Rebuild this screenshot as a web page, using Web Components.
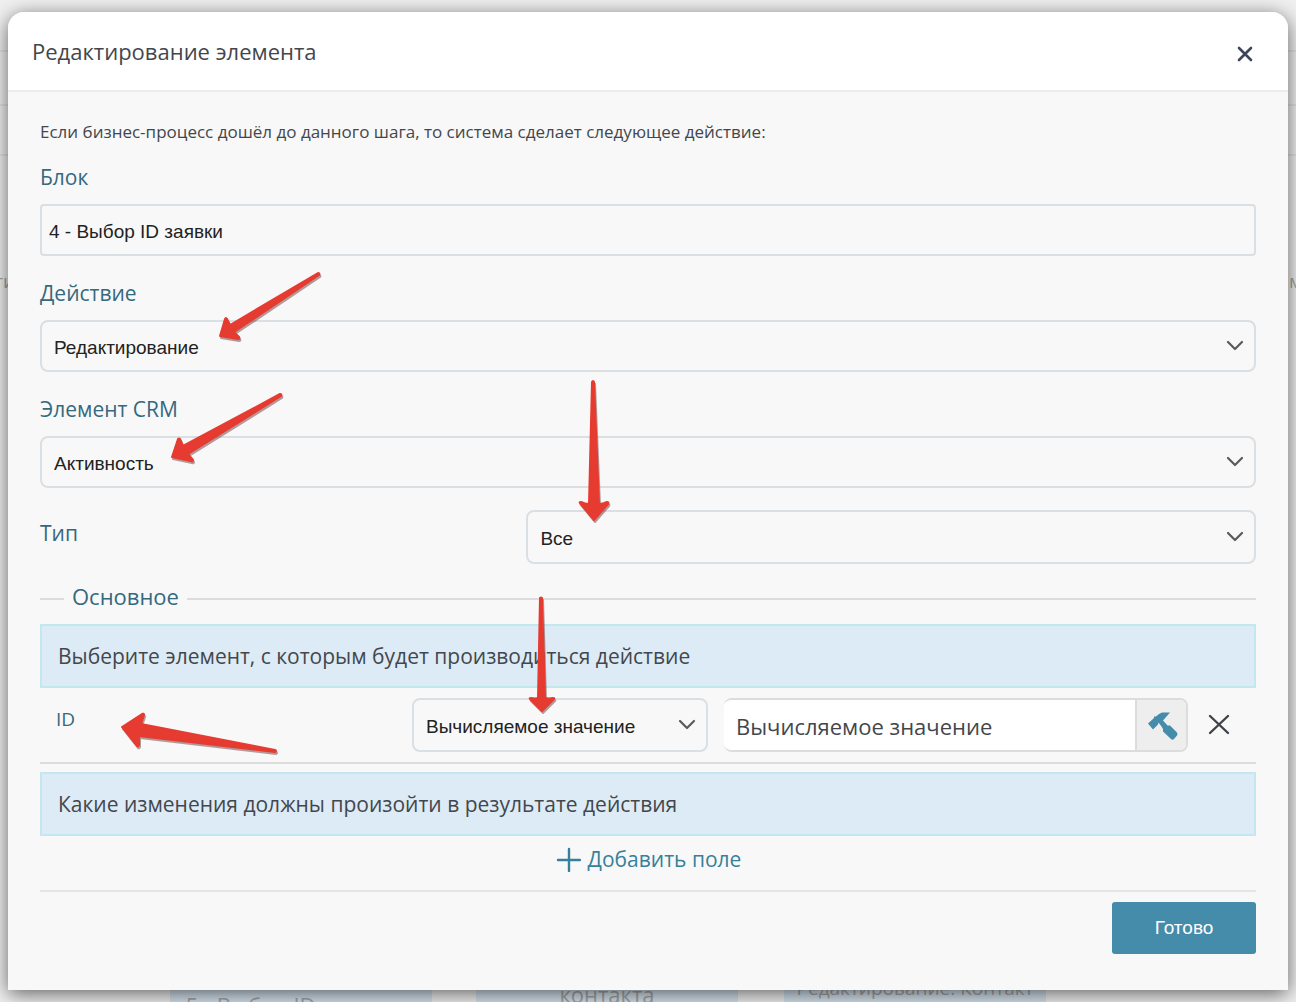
<!DOCTYPE html>
<html lang="ru">
<head>
<meta charset="utf-8">
<title>Редактирование элемента</title>
<style>
  html, body { margin: 0; min-height: 100%; }
  body { background: #ededed; font-family: "Open Sans", "Noto Sans", sans-serif; color: #43474c; overflow: hidden; }
</style>
</head>
<body>
<process-page>
  <process-canvas slot="canvas"></process-canvas>
  <modal-dialog heading="Редактирование элемента">
    <intro-text>Если бизнес-процесс дошёл до данного шага, то система сделает следующее действие:</intro-text>
    <text-field label="Блок" value="4 - Выбор ID заявки"></text-field>
    <select-field label="Действие" value="Редактирование"></select-field>
    <select-field label="Элемент CRM" value="Активность"></select-field>
    <select-field label="Тип" value="Все" inline></select-field>
    <field-group legend="Основное">
      <info-banner>Выберите элемент, с которым будет производиться действие</info-banner>
      <condition-row label="ID" mode="Вычисляемое значение" value="Вычисляемое значение"></condition-row>
      <info-banner>Какие изменения должны произойти в результате действия</info-banner>
      <add-link>Добавить поле</add-link>
    </field-group>
    <action-button slot="footer">Готово</action-button>
  </modal-dialog>
  <pointer-arrows slot="notes"></pointer-arrows>
</process-page>
<script>
const define = (name, html, setup) => customElements.define(name, class extends HTMLElement {
  constructor() {
    super();
    const t = document.createElement('template');
    t.innerHTML = '<style>*{box-sizing:border-box}</style>' + html;
    this.attachShadow({ mode: 'open' }).append(t.content.cloneNode(true));
  }
  connectedCallback() { if (setup) setup(this, this.shadowRoot); }
});

const selectCss = `
  .select { display: grid; align-items: center; }
  .select > * { grid-area: 1 / 1; }
  select { appearance: none; width: 100%; height: 52px; padding: 2px 40px 0 12px; border: 2px solid #d9dfe3; border-radius: 8px;
    background: #f8f8f8; color: #222; font: 19px "Liberation Sans", Arial, sans-serif; }
  .select svg { justify-self: end; margin-right: 12px; pointer-events: none; }`;
const chevron = `<svg width="18" height="12" viewBox="0 0 18 12" fill="none" stroke="#5a5a5a" stroke-width="2.2" stroke-linecap="round" stroke-linejoin="round"><path d="M2 2l7 7 7-7"/></svg>`;

define('process-page', `
<style>
  :host { display: grid; position: relative; min-height: 100vh; overflow: hidden; }
  ::slotted(*) { grid-area: 1 / 1; min-width: 0; }
</style>
<slot name="canvas"></slot><slot></slot><slot name="notes"></slot>`);

define('process-canvas', `
<style>
  :host { display: block; position: absolute; inset: 0; overflow: hidden; color: #a6a6a6; font-size: 19px; line-height: 28px; background: #f0f0f0; }
  .bar { border-bottom: 2px solid #e2e2e2; }
  .bar.tabs { height: 52px; }
  .bar.tools { height: 54px; }
  .bar.path { height: 50px; }
  .edge { position: absolute; top: 267px; }
  .left { left: -6px; }
  .right { right: -7px; }
  .node { position: absolute; top: 940px; height: 80px; background: #d5e3ee; text-align: center; padding-top: 40px; width: 262px; white-space: nowrap; }
  .a { left: 170px; padding-top: 51px; font-size: 22px; }
  .b { left: 476px; font-size: 22px; }
  .c { left: 784px; padding-top: 34px; }
</style>
<div class="bar tabs"></div><div class="bar tools"></div><div class="bar path"></div>
<span class="edge left">ти</span><span class="edge right">м</span>
<div class="node a">5 - Выбор ID контакта</div>
<div class="node b">контакта</div>
<div class="node c">Редактирование: Контакт</div>`);

define('modal-dialog', `
<style>
  :host { display: block; position: relative; align-self: start; margin: 12px 8px; background: #f8f8f8; border-radius: 16px 16px 0 0;
    box-shadow: 0 4px 20px rgba(0,0,0,.6); }
  header { display: flex; align-items: center; justify-content: space-between; height: 80px; padding: 0 31px 0 24px; background: #fff;
    border-bottom: 2px solid #ebedee; border-radius: 16px 16px 0 0; }
  h2 { margin: 0; font-size: 22px; line-height: 30px; font-weight: 500; }
  .close { display: grid; place-items: center; width: 24px; height: 24px; margin-top: 6px; padding: 0; border: 0; background: none; }
  main { display: block; padding: 24px 32px 0; }
  footer { display: flex; justify-content: flex-end; margin: 0 32px; padding: 10px 0 36px; border-top: 2px solid #e5e5e5; }
</style>
<header><h2></h2>
<button class="close" aria-label="Закрыть"><svg width="16" height="16" viewBox="0 0 16 16" fill="none" stroke="#3d465b" stroke-width="2.6" stroke-linecap="round"><path d="M2 2l12 12M14 2L2 14"/></svg></button></header>
<main><slot></slot></main>
<footer><slot name="footer"></slot></footer>`,
(el, r) => { r.querySelector('h2').textContent = el.getAttribute('heading'); });

define('intro-text', `<style>:host { display: block; font-size: 17px; line-height: 32px; }</style><slot></slot>`);

define('text-field', `
<style>
  :host { display: block; padding-top: 12px; }
  label { display: block; color: #34697f; font-size: 21px; line-height: 34px; margin-bottom: 10px; }
  input { display: block; width: 100%; height: 52px; padding: 3px 7px 0; border: 2px solid #d9dfe3; border-radius: 4px; background: #f8f8f8; color: #222;
    font: 19px "Liberation Sans", Arial, sans-serif; }
</style>
<label for="f"></label><input id="f" type="text">`,
(el, r) => { r.querySelector('label').textContent = el.getAttribute('label'); r.querySelector('input').value = el.getAttribute('value'); });

define('select-field', `
<style>${selectCss}
  :host { display: block; padding-top: 20px; }
  label { display: block; color: #34697f; font-size: 21px; line-height: 34px; margin-bottom: 10px; }
  :host([inline]) { display: grid; grid-template-columns: 2fr 3fr; padding-top: 22px; }
  :host([inline]) label { padding-top: 6px; margin: 0; }
  :host([inline]) select { height: 54px; padding-top: 3px; }
</style>
<label for="f"></label><div class="select"><select id="f"><option></option></select>${chevron}</div>`,
(el, r) => { r.querySelector('label').textContent = el.getAttribute('label'); r.querySelector('option').textContent = el.getAttribute('value'); });

define('field-group', `
<style>
  :host { display: block; padding-top: 16px; }
  fieldset { margin: 0; padding: 6px 0 0; border: 0; border-top: 2px solid #dcdcdc; min-width: 0; }
  legend { margin-left: 24px; padding: 0 8px 6px; color: #34697f; font-size: 22px; line-height: 32px; }
</style>
<fieldset><legend></legend><slot></slot></fieldset>`,
(el, r) => { r.querySelector('legend').textContent = el.getAttribute('legend'); });

define('info-banner', `
<style>:host { display: block; padding: 14px 16px; border: 2px solid #c2e7ef; background: #ddebf6; font-size: 21px; line-height: 32px; }</style><slot></slot>`);

define('condition-row', `
<style>${selectCss}
  :host { display: grid; grid-template-columns: 356px 296px minmax(0, 1fr) 30px; padding: 10px 22px 10px 16px; margin-bottom: 8px; border-bottom: 2px solid #dcdcdc; }
  label { color: #34697f; font-size: 19px; line-height: 24px; padding-top: 9px; }
  select { height: 54px; padding-top: 3px; }
  .value { display: flex; height: 54px; margin: 0 16px; border: 2px solid #dcdcdc; border-left: 0; border-radius: 8px; overflow: hidden; background: #fff; }
  .value input { flex: 1; min-width: 0; padding: 2px 12px 0; border: 0; background: #fff; color: #43474c; font: 22px "Open Sans", "Noto Sans", sans-serif; }
  button { padding: 0; border: 0; background: none; display: grid; place-items: center; }
  .value button { width: 51px; border-left: 2px solid #dcdcdc; background: #eee; }
</style>
<label for="m"></label>
<div class="select"><select id="m"><option></option></select>${chevron}</div>
<div class="value"><input type="text" aria-label="Значение">
<button aria-label="Формула"><svg width="32" height="32" viewBox="0 0 32 32" fill="#458baa"><path d="M2 14.5L8 9V7.500H10Q13 4.500 16 3.500H24L17 11.500L21.500 16.500H24L31 23.500Q32 25.500 31 26.500L28 30Q26 31.500 25 30L17 22.500V20L15.500 17.500L12.500 13.500L12 15.500L7 20.500Z"/></svg></button></div>
<button aria-label="Удалить"><svg width="22" height="22" viewBox="0 0 22 22" fill="none" stroke="#3f4348" stroke-width="2.4" stroke-linecap="round"><path d="M2 2l18 17M20 2L2 19"/></svg></button>`,
(el, r) => {
  r.querySelector('label').textContent = el.getAttribute('label');
  r.querySelector('option').textContent = el.getAttribute('mode');
  r.querySelector('input').value = el.getAttribute('value');
});

define('add-link', `
<style>
  :host { display: flex; justify-content: center; padding: 6px 0 14px; }
  a { display: flex; align-items: center; gap: 7px; color: #36809c; text-decoration: none; font-size: 21px; line-height: 34px; }
</style>
<a href="#"><svg width="26" height="26" viewBox="0 0 26 26" fill="none" stroke="#36809c" stroke-width="2.4" stroke-linecap="round"><path d="M14 3v22M3 14h22"/></svg><slot></slot></a>`);

define('action-button', `
<style>
  :host { display: block; }
  button { width: 144px; height: 52px; padding: 0; border: 0; border-radius: 3px; background: #458baa; color: #fff; font: 19px "Liberation Sans", Arial, sans-serif; }
</style>
<button><slot></slot></button>`);

define('pointer-arrows', `
<style>
  :host { display: block; position: absolute; top: 0; left: 0; pointer-events: none; }
  svg { display: block; filter: drop-shadow(1px 2px 0 rgba(110,60,60,.5)); }
</style>
<svg width="700" height="780" viewBox="0 0 700 780" fill="#e63b30" stroke="#e63b30" stroke-width="2" stroke-linejoin="round">
  <path d="M220 336L225 319Q226 317 227 319L230 325L318 273Q320 273 319 275L234 332L239 337Q240 339 238 339Z"/>
  <path d="M172 457L178 439Q179 438 180 439L183 446L280 394Q282 394 281 396L188 454L193 460Q193 462 191 461Z"/>
  <path d="M594 520L580 503Q579 502 581 502Q585 504 589 504L592 382Q593 380 594 382L599 504Q603 504 607 502Q609 502 608 504Z"/>
  <path d="M542 711L530 699Q529 698 531 698Q535 699 538 698L540 598Q541 597 542 598L545 698Q549 699 553 698Q555 698 554 699Z"/>
  <path d="M122 727L142 714Q144 713 144 715L141 724L275 750Q277 751 275 752L139 736L139 745Q138 747 137 746Z"/>
</svg>`);
</script>
</body>
</html>
